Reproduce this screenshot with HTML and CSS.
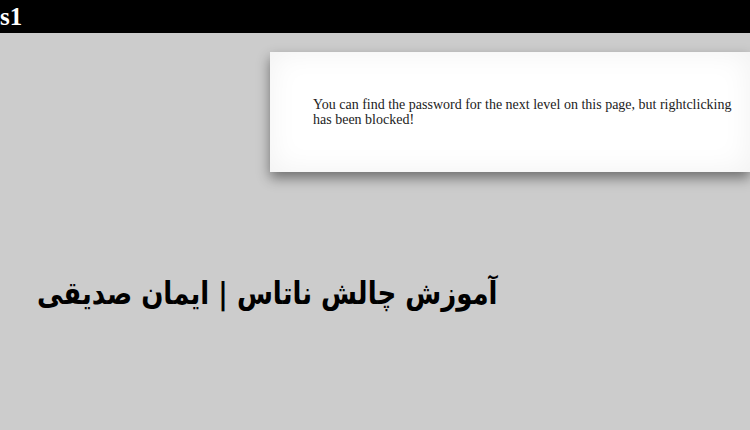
FILE: index.html
```html
<!DOCTYPE html>
<html>
<head>
<meta charset="utf-8">
<link rel="stylesheet" href="styles.css">
</head>
<body>
<div class="header">s1</div>
<div class="content">
  <div class="card">
    <p class="msg">You can find the password for the next level on this page, but rightclicking has been blocked!</p>
  </div>
  <div class="title" dir="rtl">آموزش چالش ناتاس | ایمان صدیقی</div>
</div>
</body>
</html>
```

FILE: styles.css
```css
html, body {
  margin: 0;
  padding: 0;
  background: #cccccc;
  overflow: hidden;
}
body {
  width: 750px;
  height: 430px;
  font-family: "Liberation Serif", "Times New Roman", serif;
}
.header {
  background: #000;
  color: #fff;
  height: 33px;
  line-height: 33px;
  font-size: 25px;
  font-weight: bold;
}
.content {
  display: flex;
  flex-direction: column;
}
.card {
  margin-left: 270px;
  margin-top: 19px;
  height: 120px;
  box-sizing: border-box;
  background: #fff;
  box-shadow: 0 6px 12px rgba(0,0,0,0.45), inset 0 0 30px rgba(0,0,0,0.06);
  padding: 45px 0 0 43px;
}
.msg {
  margin: 0;
  font-size: 14px;
  line-height: 15px;
  color: #222;
  width: 430px;
}
.title {
  align-self: flex-start;
  margin-top: 103px;
  margin-left: 37px;
  font-family: "DejaVu Sans", sans-serif;
  font-weight: bold;
  font-size: 31px;
  color: #000;
  transform: scaleX(0.84);
  transform-origin: left center;
}
```
